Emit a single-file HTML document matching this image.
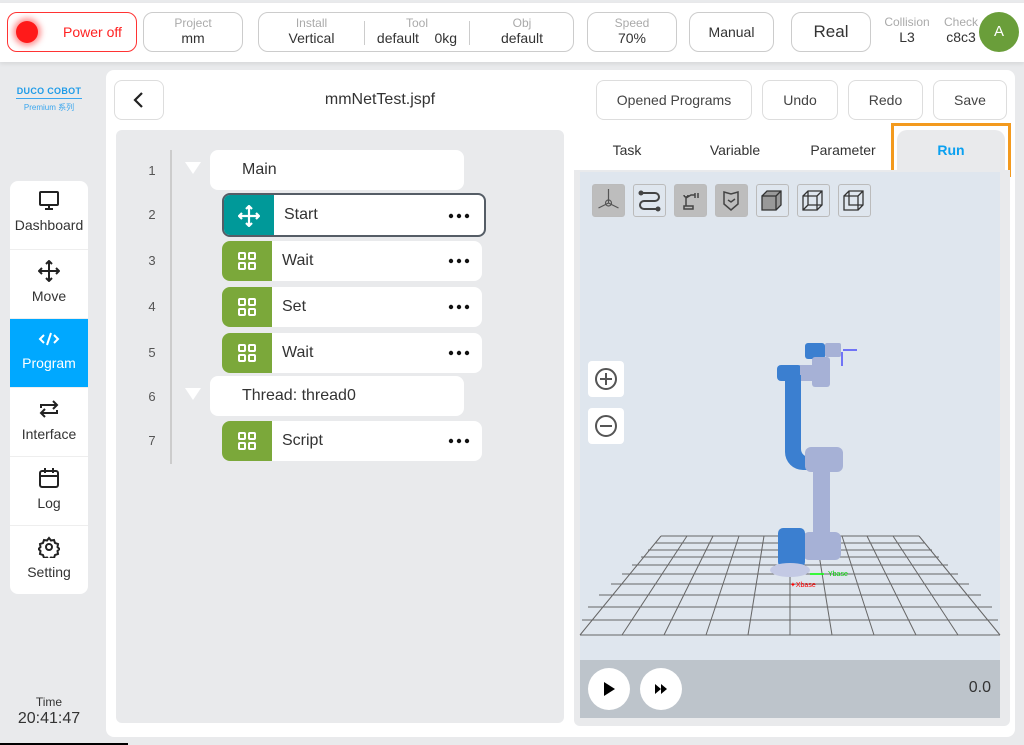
<!DOCTYPE html>
<html><head><meta charset="utf-8"><style>
*{box-sizing:border-box;margin:0;padding:0}
body{width:1024px;height:745px;background:#e9eaec;font-family:"Liberation Sans","Noto Sans CJK SC",sans-serif;position:relative;overflow:hidden;color:#333}
.abs{position:absolute}
.top{left:0;top:3px;width:1024px;height:59px;background:#fff;box-shadow:0 2px 4px rgba(0,0,0,.08)}
.box{position:absolute;top:12px;height:40px;border:1px solid #ccc;border-radius:10px;background:#fff;text-align:center}
.lbl{font-size:12px;color:#aaa;line-height:13px;margin-top:4px}
.val{font-size:14px;color:#333;line-height:17px}
.nav{left:10px;top:181px;width:78px;height:413px;background:#fff;border-radius:8px;overflow:hidden}
.nav div{height:69px;border-bottom:1px solid #eee;text-align:center;font-size:14px;color:#333;padding-top:10px}
.nav svg{display:block;margin:0 auto 6px}
.btn{position:absolute;top:80px;height:40px;border:1px solid #ddd;border-radius:8px;background:#fff;font-size:14px;color:#444;text-align:center;line-height:38px}
.num{position:absolute;left:140px;width:24px;text-align:center;font-size:13px;color:#555}
.blk{position:absolute;left:222px;width:260px;height:40px;background:#fff;border-radius:8px;overflow:hidden}
.blk .ic{position:absolute;left:0;top:0;width:50px;height:40px;background:#7ba83a}
.blk .t{position:absolute;left:60px;top:11px;font-size:16px;color:#333}
.blk .d{position:absolute;right:12px;top:17px}
.tab{position:absolute;top:130px;height:40px;font-size:14px;color:#333;line-height:40px;text-align:center}
.vb{position:absolute;top:184px;width:33px;height:33px;border:1px solid #bbb;border-radius:3px;background:#dfe6ee}
</style></head><body>
<div class="abs top"></div>
<div class="box" style="left:7px;width:130px;border-color:#f33"><div class="abs" style="left:8px;top:8px;width:22px;height:22px;border-radius:50%;background:#ff1a1a;box-shadow:0 0 6px 3px rgba(255,40,40,.5)"></div><div class="abs" style="left:55px;top:11px;font-size:14px;color:#f22">Power off</div></div>
<div class="box" style="left:143px;width:100px"><div class="lbl">Project</div><div class="val">mm</div></div>
<div class="box" style="left:258px;width:316px">
<div class="abs" style="left:0;width:105px"><div class="lbl">Install</div><div class="val">Vertical</div></div>
<div class="abs" style="left:105px;top:8px;width:1px;height:24px;background:#ccc"></div>
<div class="abs" style="left:106px;width:104px"><div class="lbl">Tool</div><div class="val">default &nbsp;&nbsp; 0kg</div></div>
<div class="abs" style="left:210px;top:8px;width:1px;height:24px;background:#ccc"></div>
<div class="abs" style="left:211px;width:104px"><div class="lbl">Obj</div><div class="val">default</div></div></div>
<div class="box" style="left:587px;width:90px"><div class="lbl">Speed</div><div class="val">70%</div></div>
<div class="box" style="left:689px;width:85px;line-height:38px;font-size:14px">Manual</div>
<div class="box" style="left:791px;width:80px;line-height:38px;font-size:17px">Real</div>
<div class="abs" style="left:880px;top:16px;width:54px;text-align:center"><div class="lbl" style="margin:0">Collision</div><div class="val">L3</div></div>
<div class="abs" style="left:938px;top:16px;width:46px;text-align:center"><div class="lbl" style="margin:0">Check</div><div class="val">c8c3</div></div>
<div class="abs" style="left:979px;top:12px;width:40px;height:40px;border-radius:50%;background:#6a9e3a;color:#fff;text-align:center;line-height:40px;font-size:15px">A</div>

<div class="abs" style="left:10px;top:86px;width:78px;text-align:center;color:#1e9be8;font-size:9px;font-weight:bold;white-space:nowrap;letter-spacing:.3px">DUCO COBOT</div>
<div class="abs" style="left:16px;top:98px;width:66px;height:1px;background:#3aa6ee"></div>
<div class="abs" style="left:10px;top:102px;width:78px;text-align:center;color:#3aa6ee;font-size:8px;white-space:nowrap">Premium 系列</div>

<div class="abs nav">
<div><svg width="22" height="20" viewBox="0 0 22 20" fill="none" stroke="#222" stroke-width="2"><rect x="2" y="1" width="18" height="13" rx="1"/><path d="M11 14v4M7 18h8"/></svg>Dashboard</div>
<div><svg width="22" height="22" viewBox="0 0 22 22" fill="none" stroke="#222" stroke-width="2"><path d="M11 1v20M1 11h20M8 4l3-3 3 3M8 18l3 3 3-3M4 8l-3 3 3 3M18 8l3 3-3 3"/></svg>Move</div>
<div style="background:#00a8ff;color:#fff"><svg width="22" height="20" viewBox="0 0 22 20" fill="none" stroke="#fff" stroke-width="2"><path d="M6 6l-4 4 4 4M16 6l4 4-4 4M13 4l-4 12"/></svg>Program</div>
<div><svg width="22" height="22" viewBox="0 0 22 22" fill="none" stroke="#222" stroke-width="2"><path d="M3 10V7h15M15 3l4 4-4 4M19 12v3H4M7 19l-4-4 4-4"/></svg>Interface</div>
<div><svg width="22" height="22" viewBox="0 0 22 22" fill="none" stroke="#222" stroke-width="2"><rect x="2" y="4" width="18" height="16" rx="2"/><path d="M2 9h18M7 1v5M15 1v5"/></svg>Log</div>
<div style="border:0"><svg width="22" height="22" viewBox="0 0 22 22" fill="none" stroke="#222" stroke-width="2"><circle cx="11" cy="11" r="3"/><path d="M11 2l2 2.5 3-.5 1 3 3 1-.5 3 2 2-2 2 .5 3-3 1-1 3-3-.5-2 2.5-2-2.5-3 .5-1-3-3-1 .5-3-2-2 2-2-.5-3 3-1 1-3 3 .5z"/></svg>Setting</div>
</div>
<div class="abs" style="left:0;top:695px;width:98px;text-align:center;font-size:12px;color:#333">Time</div>
<div class="abs" style="left:0;top:710px;width:98px;text-align:center;font-size:16px;color:#333">20:41:47</div>
<div class="abs" style="left:0;top:743px;width:128px;height:2px;background:#000"></div>

<div class="abs" style="left:106px;top:70px;width:909px;height:667px;background:#fff;border-radius:8px"></div>
<div class="btn" style="left:114px;width:50px"><svg width="14" height="16" viewBox="0 0 14 16" style="margin-top:11px" fill="none" stroke="#222" stroke-width="2.2"><path d="M10 1L3 8l7 7"/></svg></div>
<div class="abs" style="left:280px;top:91px;width:200px;text-align:center;font-size:16px;color:#333">mmNetTest.jspf</div>
<div class="btn" style="left:596px;width:156px">Opened Programs</div>
<div class="btn" style="left:762px;width:76px">Undo</div>
<div class="btn" style="left:848px;width:75px">Redo</div>
<div class="btn" style="left:933px;width:74px">Save</div>

<div class="abs" style="left:116px;top:130px;width:448px;height:593px;background:#e9eaec;border-radius:6px"></div>
<div class="abs" style="left:170px;top:150px;width:2px;height:314px;background:#ccc"></div>
<div class="num" style="top:163px">1</div><div class="num" style="top:207px">2</div><div class="num" style="top:253px">3</div><div class="num" style="top:299px">4</div><div class="num" style="top:345px">5</div><div class="num" style="top:389px">6</div><div class="num" style="top:433px">7</div>
<div class="abs" style="left:185px;top:162px;width:0;height:0;border-left:8px solid transparent;border-right:8px solid transparent;border-top:12px solid #fff"></div>
<div class="abs" style="left:185px;top:388px;width:0;height:0;border-left:8px solid transparent;border-right:8px solid transparent;border-top:12px solid #fff"></div>
<div class="abs" style="left:210px;top:150px;width:254px;height:40px;background:#fff;border-radius:8px;font-size:16px;padding:11px 32px">Main</div>
<div class="abs" style="left:210px;top:376px;width:254px;height:40px;background:#fff;border-radius:8px;font-size:16px;padding:11px 32px">Thread: thread0</div>
<div class="blk" style="left:222px;top:193px;width:264px;height:44px;border:2px solid #555d66"><div class="ic" style="background:#009999;height:42px"><svg width="22" height="22" viewBox="0 0 22 22" style="margin:10px 14px" fill="none" stroke="#fff" stroke-width="2.2"><path d="M11 1v20M1 11h20M8 4l3-3 3 3M8 18l3 3 3-3M4 8l-3 3 3 3M18 8l3 3-3 3"/></svg></div><div class="t" style="top:11px">Start</div><svg class="d" style="top:18px;right:14px" width="22" height="6"><circle cx="3" cy="3" r="2.2" fill="#111"/><circle cx="11" cy="3" r="2.2" fill="#111"/><circle cx="19" cy="3" r="2.2" fill="#111"/></svg></div>
<div class="blk" style="top:241px"><div class="ic"><svg width="20" height="20" viewBox="0 0 20 20" style="margin:10px 15px" fill="none" stroke="#fff" stroke-width="2"><rect x="2" y="2" width="6" height="6" rx="1"/><rect x="12" y="2" width="6" height="6" rx="1"/><rect x="2" y="12" width="6" height="6" rx="1"/><rect x="12" y="12" width="6" height="6" rx="1"/></svg></div><div class="t">Wait</div><svg class="d" width="22" height="6"><circle cx="3" cy="3" r="2.2" fill="#111"/><circle cx="11" cy="3" r="2.2" fill="#111"/><circle cx="19" cy="3" r="2.2" fill="#111"/></svg></div>
<div class="blk" style="top:287px"><div class="ic"><svg width="20" height="20" viewBox="0 0 20 20" style="margin:10px 15px" fill="none" stroke="#fff" stroke-width="2"><rect x="2" y="2" width="6" height="6" rx="1"/><rect x="12" y="2" width="6" height="6" rx="1"/><rect x="2" y="12" width="6" height="6" rx="1"/><rect x="12" y="12" width="6" height="6" rx="1"/></svg></div><div class="t">Set</div><svg class="d" width="22" height="6"><circle cx="3" cy="3" r="2.2" fill="#111"/><circle cx="11" cy="3" r="2.2" fill="#111"/><circle cx="19" cy="3" r="2.2" fill="#111"/></svg></div>
<div class="blk" style="top:333px"><div class="ic"><svg width="20" height="20" viewBox="0 0 20 20" style="margin:10px 15px" fill="none" stroke="#fff" stroke-width="2"><rect x="2" y="2" width="6" height="6" rx="1"/><rect x="12" y="2" width="6" height="6" rx="1"/><rect x="2" y="12" width="6" height="6" rx="1"/><rect x="12" y="12" width="6" height="6" rx="1"/></svg></div><div class="t">Wait</div><svg class="d" width="22" height="6"><circle cx="3" cy="3" r="2.2" fill="#111"/><circle cx="11" cy="3" r="2.2" fill="#111"/><circle cx="19" cy="3" r="2.2" fill="#111"/></svg></div>
<div class="blk" style="top:421px"><div class="ic"><svg width="20" height="20" viewBox="0 0 20 20" style="margin:10px 15px" fill="none" stroke="#fff" stroke-width="2"><rect x="2" y="2" width="6" height="6" rx="1"/><rect x="12" y="2" width="6" height="6" rx="1"/><rect x="2" y="12" width="6" height="6" rx="1"/><rect x="12" y="12" width="6" height="6" rx="1"/></svg></div><div class="t">Script</div><svg class="d" width="22" height="6"><circle cx="3" cy="3" r="2.2" fill="#111"/><circle cx="11" cy="3" r="2.2" fill="#111"/><circle cx="19" cy="3" r="2.2" fill="#111"/></svg></div>

<div class="tab" style="left:574px;width:106px">Task</div>
<div class="tab" style="left:682px;width:106px">Variable</div>
<div class="tab" style="left:790px;width:106px">Parameter</div>
<div class="abs" style="left:897px;top:130px;width:108px;height:42px;background:#e9eaec;border-radius:10px 10px 0 0"></div>
<div class="tab" style="left:897px;width:108px;color:#0aa0f0;font-weight:bold">Run</div>
<div class="abs" style="left:891px;top:123px;width:120px;height:54px;border:3px solid #f39a1e"></div>
<div class="abs" style="left:574px;top:170px;width:436px;height:556px;background:#e9eaec;border-radius:0 0 6px 6px"></div>
<div class="abs" style="left:580px;top:172px;width:420px;height:546px;background:#dfe6ee"></div>
<div class="vb" style="left:592px;background:#bdbdbd"><svg width="31" height="31" viewBox="0 0 31 31" fill="none" stroke="#555" stroke-width="1.2"><path d="M15.5 4v14M15.5 18l-10 5M15.5 18l10 5"/><circle cx="15.5" cy="18" r="3"/></svg></div>
<div class="vb" style="left:633px"><svg width="31" height="31" viewBox="0 0 31 31" fill="none" stroke="#444" stroke-width="2"><path d="M7 8h14a4 4 0 010 8H10a4 4 0 000 8h14"/><circle cx="7" cy="8" r="1.5" fill="#444"/><circle cx="24" cy="24" r="1.5" fill="#444"/></svg></div>
<div class="vb" style="left:674px;background:#bdbdbd"><svg width="31" height="31" viewBox="0 0 31 31" fill="none" stroke="#444" stroke-width="1.5"><path d="M9 24h9v-3H9zM11 21V13l5-3h4M20 8v5M23 8v5M9 10a2 2 0 104 0"/></svg></div>
<div class="vb" style="left:715px;background:#bdbdbd"><svg width="31" height="31" viewBox="0 0 31 31" fill="none" stroke="#444" stroke-width="1.5"><path d="M8 7l7 2 7-2v12l-7 6-7-6z M12 15l3 2 4-3"/></svg></div>
<div class="vb" style="left:756px"><svg width="31" height="31" viewBox="0 0 31 31" fill="none" stroke="#333" stroke-width="1.3"><path d="M5 11h14v14H5zM5 11l5-5h14v14l-5 5M19 11l5-5" fill="#999"/></svg></div>
<div class="vb" style="left:797px"><svg width="31" height="31" viewBox="0 0 31 31" fill="none" stroke="#333" stroke-width="1.3"><path d="M5 11h14v14H5zM5 11l5-5h14v14l-5 5M19 11l5-5M10 6v14h14M10 20l-5 5"/></svg></div>
<div class="vb" style="left:838px"><svg width="31" height="31" viewBox="0 0 31 31" fill="none" stroke="#333" stroke-width="1.3"><path d="M5 11h14v14H5zM5 11l5-5h14v14l-5 5M19 11l5-5M10 6v14h14"/></svg></div>
<div class="abs" style="left:588px;top:361px;width:36px;height:36px;background:#fff;border-radius:4px"><svg width="36" height="36" viewBox="0 0 36 36" fill="none" stroke="#555" stroke-width="2"><circle cx="18" cy="18" r="10"/><path d="M18 12v12M12 18h12"/></svg></div>
<div class="abs" style="left:588px;top:408px;width:36px;height:36px;background:#fff;border-radius:4px"><svg width="36" height="36" viewBox="0 0 36 36" fill="none" stroke="#555" stroke-width="2"><circle cx="18" cy="18" r="10"/><path d="M12 18h12"/></svg></div>
<svg class="abs" style="left:0;top:0" width="1024" height="745" viewBox="0 0 1024 745" fill="none">
<g stroke="#666" stroke-width="1">
<path d="M661 536H919M655 543H925M648 550H932M641 557H939M632 565H948M622 574H958M611 584H969M599 595H981M588 607H992M582 620H998M580 635H1000"/>
<path d="M661 536L580 635M687 536L622 635M713 536L664 635M739 536L706 635M764 536L748 635M790 536L790 635M816 536L832 635M842 536L874 635M867 536L916 635M893 536L958 635M919 536L1000 635"/>
</g>
<g>
<rect x="805" y="343" width="20" height="16" rx="3" fill="#3b7fd0"/><rect x="825" y="343" width="16" height="14" rx="2" fill="#a6b1d6"/>
<rect x="812" y="357" width="18" height="30" rx="3" fill="#a6b1d6"/>
<rect x="777" y="365" width="25" height="16" rx="4" fill="#3b7fd0"/><rect x="800" y="365" width="15" height="16" fill="#a6b1d6"/>
<path d="M785 375h16v74a8 8 0 0 0 8 8v13h-6a18 18 0 0 1 -18-18z" fill="#3b7fd0"/>
<rect x="805" y="447" width="38" height="25" rx="6" fill="#a6b1d6"/>
<rect x="813" y="470" width="17" height="64" fill="#a6b1d6"/>
<rect x="803" y="532" width="38" height="28" rx="6" fill="#a6b1d6"/>
<rect x="778" y="528" width="27" height="39" rx="5" fill="#3b7fd0"/>
<ellipse cx="790" cy="570" rx="20" ry="7" fill="#c3c9e4"/>
<path d="M810 574h14" stroke="#0f0" stroke-width="1.5"/><text x="828" y="576" font-size="7" fill="#0c0" font-family="Liberation Sans">Ybase</text>
<text x="790" y="587" font-size="7" fill="#f00" font-family="Liberation Sans">✦Xbase</text>
<path d="M843 350h14M842 352v14" stroke="#00f" stroke-width="1"/>
</g>
</svg>
<div class="abs" style="left:580px;top:660px;width:420px;height:58px;background:#bdc4cb"></div>
<div class="abs" style="left:588px;top:668px;width:42px;height:42px;border-radius:50%;background:#fff"><svg width="42" height="42" viewBox="0 0 42 42"><path d="M16 14l11 7-11 7z" fill="#000"/></svg></div>
<div class="abs" style="left:640px;top:668px;width:42px;height:42px;border-radius:50%;background:#fff"><svg width="42" height="42" viewBox="0 0 42 42"><path d="M15 16l6 5-6 5zM21 16l6 5-6 5z" fill="#000"/></svg></div>
<div class="abs" style="left:950px;top:679px;width:41px;text-align:right;font-size:16px;color:#333">0.0</div>
</body></html>
